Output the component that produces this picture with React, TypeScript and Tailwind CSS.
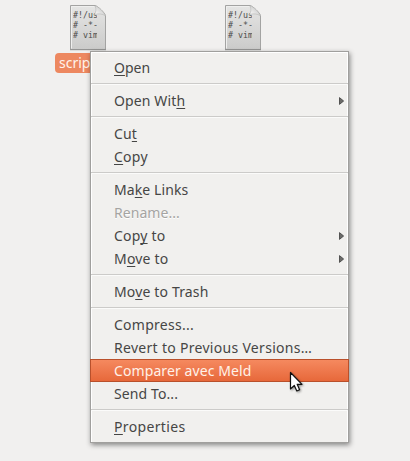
import { Fragment } from "react";

type Item = {
  text: string;
  accel?: number;
  spacing?: string;
  submenu?: boolean;
  disabled?: boolean;
  selected?: boolean;
};

const groups: Item[][] = [
  [{ text: "Open", accel: 0 }],
  [{ text: "Open With", accel: 8, submenu: true, spacing: "tracking-[0.12px]" }],
  [
    { text: "Cut", accel: 2, spacing: "tracking-[0.15px]" },
    { text: "Copy", accel: 0, spacing: "tracking-[0.25px]" },
  ],
  [
    { text: "Make Links", accel: 2, spacing: "tracking-[0.1px]" },
    { text: "Rename...", disabled: true, spacing: "tracking-[0.05px]" },
    { text: "Copy to", accel: 3, submenu: true, spacing: "tracking-[0.2px]" },
    { text: "Move to", accel: 1, submenu: true, spacing: "tracking-[0.2px]" },
  ],
  [{ text: "Move to Trash", accel: 2, spacing: "tracking-[0.15px]" }],
  [
    { text: "Compress...", spacing: "tracking-[0.27px]" },
    { text: "Revert to Previous Versions…", spacing: "tracking-[0.3px]" },
    { text: "Comparer avec Meld", selected: true, spacing: "tracking-[0.1px]" },
    { text: "Send To...", spacing: "tracking-[0.1px]" },
  ],
  [{ text: "Properties", accel: 0, spacing: "tracking-[0.35px]" }],
];

function Label({ text, accel }: Item) {
  if (accel === undefined) return <>{text}</>;
  return (
    <>
      {text.slice(0, accel)}
      <span className="underline decoration-1 underline-offset-2 [text-decoration-skip-ink:none]">{text[accel]}</span>
      {text.slice(accel + 1)}
    </>
  );
}

function MenuRow(item: Item) {
  const tone = item.selected
    ? "-mx-px border border-[#b9502b] bg-linear-to-b from-[#f5895f] to-[#e7683a] pl-[23px] text-[#fff1e8]"
    : item.disabled
      ? "pl-[23px] text-[#a5a4a2] [text-shadow:0_1px_0_#fff]"
      : "pl-[23px] text-[#464645]";
  return (
    <div className={`flex h-[23px] items-center justify-between pr-1 ${tone}`}>
      <span className={`whitespace-pre ${item.spacing ?? ""}`}>
        <Label {...item} />
      </span>
      {item.submenu && (
        <svg width="5" height="8" viewBox="0 0 5 8">
          <path d="M0.5 0.6L4.6 4L0.5 7.4Z" fill="#6b6b69" stroke="#484847" strokeWidth="0.9" />
        </svg>
      )}
    </div>
  );
}

function FileIcon() {
  return (
    <div className="relative h-[46px] w-[37px]">
      <svg width="37" height="46" viewBox="0 0 37 46" className="absolute inset-0">
        <defs>
          <linearGradient id="paper" x1="0" y1="0" x2="0" y2="1">
            <stop offset="0" stopColor="#e5e5e4" />
            <stop offset="1" stopColor="#cbcbca" />
          </linearGradient>
          <linearGradient id="fold" x1="0" y1="1" x2="0.8" y2="0.2">
            <stop offset="0" stopColor="#ffffff" />
            <stop offset="1" stopColor="#c8c8c7" />
          </linearGradient>
        </defs>
        <path d="M0.5 0.5H25C27.5 0.8 35 8 35.5 10.5V44.5H0.5Z" fill="url(#paper)" stroke="#a3a3a2" />
        <path d="M1.5 43.5V1.5H24.5" fill="none" stroke="#efefee" />
        <path d="M0 44.7H36" stroke="#929291" />
      </svg>
      <pre className="absolute top-[5px] left-[3px] w-[24px] overflow-hidden font-['DejaVu_Sans_Mono',monospace] text-[8.3px] leading-[10px] text-[#4d4d4c]">
        {"#!/us\n# -*-\n# vim"}
      </pre>
      <svg width="37" height="46" viewBox="0 0 37 46" className="absolute inset-0">
        <path d="M25 0.8C26.5 4 26 7 24.5 9.5C28.5 8.3 32.5 8.8 35.3 10.7C33.5 6.5 29 2 25 0.8Z" fill="url(#fold)" stroke="#b5b5b4" strokeWidth="0.6" />
      </svg>
    </div>
  );
}

export default function App() {
  return (
    <div className="relative h-[461px] w-[410px] overflow-hidden bg-[#f1f0ef] font-['Noto_Sans','Open_Sans',sans-serif] text-[14px] leading-[22px]">
      <div className="flex gap-[118px] pt-[5px] pl-[70px]">
        <FileIcon />
        <FileIcon />
      </div>
      <div className="mt-[2px] ml-[55px] h-5 w-[72px] rounded-[4px] bg-[#ed8860] pl-1 leading-5 text-[#fff3ec]">
        script1
      </div>

      <div className="absolute top-[51px] left-[90px] h-[392px] w-[259px] border border-[#a09f9d] bg-[#f1f0ee] py-1 shadow-[1px_2px_5px_rgba(0,0,0,0.45),inset_-1px_0_0_#fff,inset_1px_1px_0_#fff]">
        {groups.map((group, index) => (
          <Fragment key={group[0].text}>
            {index > 0 && (
              <div className="h-[10px] pt-1">
                <div className="h-[2px] border-t border-b border-t-[#cccbc9] border-b-[#fbfbfa]" />
              </div>
            )}
            {group.map((item) => (
              <MenuRow key={item.text} {...item} />
            ))}
          </Fragment>
        ))}
      </div>

      <svg width="16" height="22" viewBox="0 0 16 22" className="absolute top-[371px] left-[289px] drop-shadow-[1px_1px_1px_rgba(0,0,0,0.4)]">
        <path d="M1.5 1.5V18L5.3 14.5L7.8 20L10.6 18.7L8.2 13.3H13Z" fill="#fff" stroke="#111" strokeWidth="1.2" strokeLinejoin="round" />
      </svg>
    </div>
  );
}
